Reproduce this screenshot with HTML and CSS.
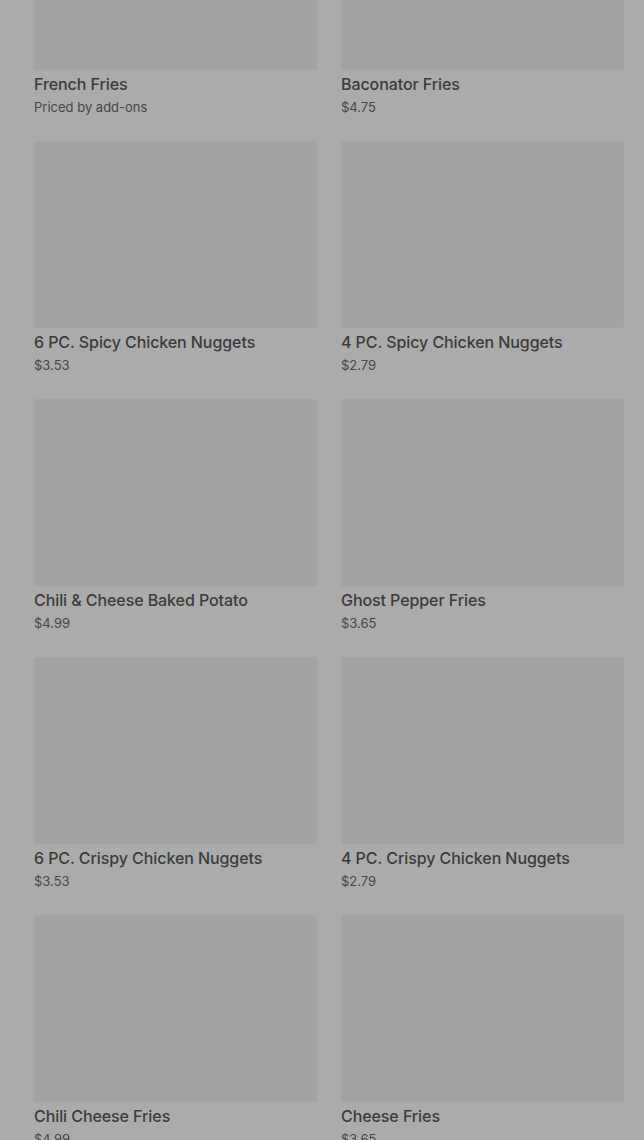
FILE: index.html
```html
<!DOCTYPE html>
<html lang="en">
<head>
    <meta charset="UTF-8">
    <meta name="viewport" content="width=device-width, initial-scale=1.0">
    <title>Sides</title>
    <link rel="stylesheet" href="styles.css">
</head>
<body>

<div class="menu">
    <div class="item">
        <div class="item-image"></div>
        <div class="item-name">French Fries</div>
        <div class="item-price">Priced by add-ons</div>
    </div>
    <div class="item">
        <div class="item-image"></div>
        <div class="item-name">Baconator Fries</div>
        <div class="item-price">$4.75</div>
    </div>
    <div class="item">
        <div class="item-image"></div>
        <div class="item-name">6 PC. Spicy Chicken Nuggets</div>
        <div class="item-price">$3.53</div>
    </div>
    <div class="item">
        <div class="item-image"></div>
        <div class="item-name">4 PC. Spicy Chicken Nuggets</div>
        <div class="item-price">$2.79</div>
    </div>
    <div class="item">
        <div class="item-image"></div>
        <div class="item-name">Chili &amp; Cheese Baked Potato</div>
        <div class="item-price">$4.99</div>
    </div>
    <div class="item">
        <div class="item-image"></div>
        <div class="item-name">Ghost Pepper Fries</div>
        <div class="item-price">$3.65</div>
    </div>
    <div class="item">
        <div class="item-image"></div>
        <div class="item-name">6 PC. Crispy Chicken Nuggets</div>
        <div class="item-price">$3.53</div>
    </div>
    <div class="item">
        <div class="item-image"></div>
        <div class="item-name">4 PC. Crispy Chicken Nuggets</div>
        <div class="item-price">$2.79</div>
    </div>
    <div class="item">
        <div class="item-image"></div>
        <div class="item-name">Chili Cheese Fries</div>
        <div class="item-price">$4.99</div>
    </div>
    <div class="item">
        <div class="item-image"></div>
        <div class="item-name">Cheese Fries</div>
        <div class="item-price">$3.65</div>
    </div>
</div>

</body>
</html>
```

FILE: styles.css
```css
body {
    font-family: Inter, "Noto Sans", sans-serif;
    background-color: #ababab;
    margin: 0;
    overflow: hidden;
}
/* список страв, прокручений вниз */
.menu {
    display: grid;
    grid-template-columns: 1fr 1fr;
    column-gap: 24px;
    row-gap: 24px;
    padding: 0 20px 0 34px;
    margin-top: -117px;
}
.item-image {
    height: 187px;
    background-color: #a3a3a3;
    border-radius: 2px;
}
.item-name {
    margin-top: 2px;
    font-size: 16px;
    font-weight: 500;
    line-height: 24px;
    letter-spacing: -0.08px;
    color: #3b3b3b;
}
.item-price {
    margin-top: 1px;
    font-size: 13px;
    line-height: 20px;
    color: #474747;
}
```
